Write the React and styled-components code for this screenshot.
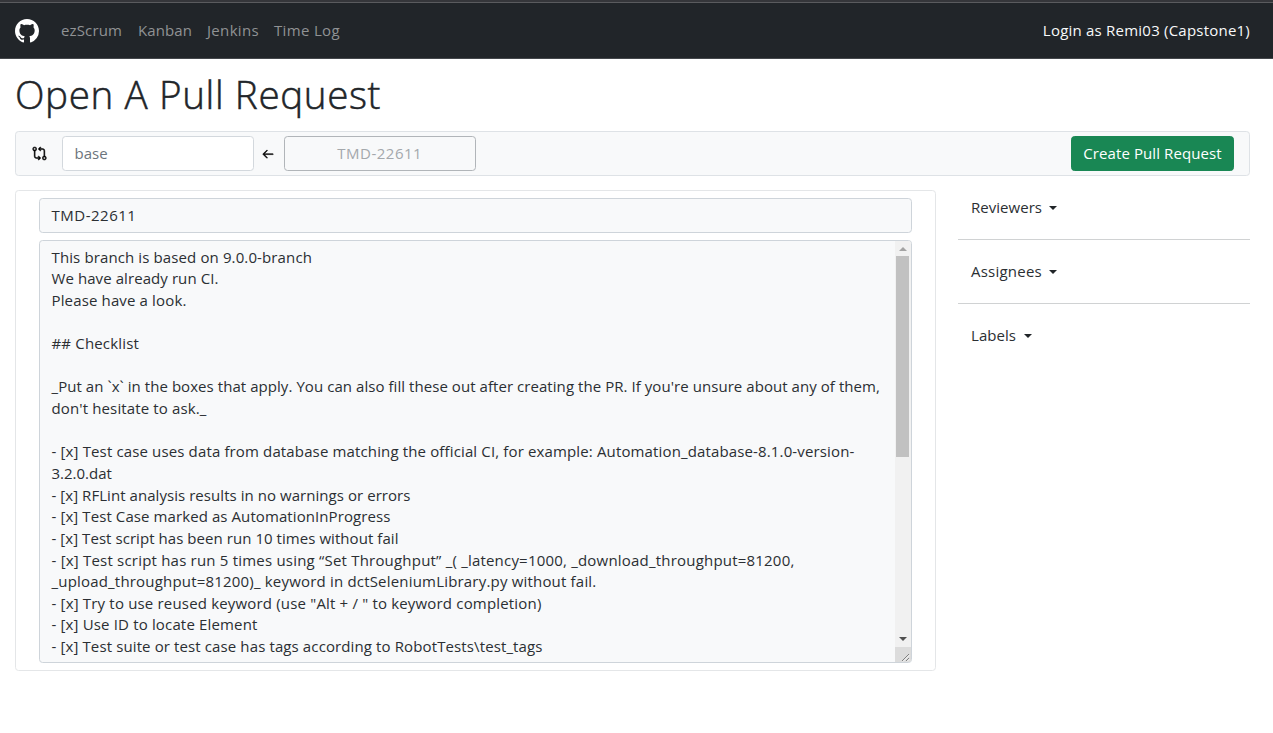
import React from "react";
import styled, { createGlobalStyle } from "styled-components";
import { GoArrowLeft, GoGitCompare } from "react-icons/go";

const GlobalStyle = createGlobalStyle`
  *, *::before, *::after { box-sizing: border-box; }
  body {
    margin: 0;
    background: #fff;
    color: #2b2f33;
    font-family: "Open Sans", "Noto Sans", sans-serif;
    font-size: 15px;
    line-height: 22px;
    overflow: hidden;
  }
`;

const Text = styled.span`
  letter-spacing: ${({ $track = 0 }) => $track}px;
  white-space: pre;
`;

const Navbar = styled.header`
  height: 59px;
  padding: 0 23px 0 15px;
  display: flex;
  align-items: center;
  background: #212529;
  border-top: 2px solid #35363a;
  border-bottom: 1px solid #44474b;
  box-shadow: inset 0 1px 0 #5a5b5e;
`;

const Brand = styled.a`
  display: flex;
  color: #fff;
  margin-right: 22px;
  padding-top: 1px;
`;

const NavLinks = styled.nav`
  display: flex;
  flex: 1;
`;

const NavLink = styled.a`
  width: ${({ $width }) => $width}px;
  color: #909294;
`;

const Login = styled.div`
  color: #f8f9fa;
`;

const Page = styled.main`
  padding: 12px 23px 0 15px;
`;

const Title = styled.h1`
  margin: 0;
  height: 60px;
  color: #212529;
  font-size: 38.6px;
  font-weight: 300;
  line-height: 46px;
  letter-spacing: 0.62px;
  -webkit-text-stroke: 0.5px #212529;
  white-space: nowrap;
`;

const CompareBar = styled.section`
  display: flex;
  align-items: center;
  height: 45px;
  padding: 0 15px;
  background: #f8f9fa;
  border: 1px solid #dee2e6;
  border-radius: 3.6px;
`;

const IconSlot = styled.span`
  display: flex;
  justify-content: ${({ $start }) => ($start ? "flex-start" : "center")};
  padding-left: ${({ $start }) => ($start ? 0.7 : 0)}px;
  padding-right: ${({ $start }) => ($start ? 0 : 2)}px;
  width: ${({ $width }) => $width}px;
  color: #000;
`;

const BranchField = styled.div`
  width: 192px;
  height: 35px;
  padding: 5px 12px 6px 11.5px;
  background: #fff;
  border: 1px solid #d3d8dd;
  border-radius: 3.6px;
  color: #6c757d;
`;

const HeadBranch = styled(BranchField)`
  background: transparent;
  border-color: #b1b5b9;
  color: #a4a8ac;
  text-align: center;
`;

const CreateButton = styled.button`
  margin-left: auto;
  width: 163px;
  height: 35px;
  padding: 0 0 1px;
  background: #198754;
  border: 1px solid #198754;
  border-radius: 3.6px;
  color: #fff;
  font: inherit;
`;

const Columns = styled.div`
  display: flex;
  gap: 22px;
  margin-top: 14px;
`;

const Card = styled.section`
  width: 921px;
  height: 481px;
  padding: 7px 23px;
  border: 1px solid #e4e6e8;
  border-radius: 3.6px;
`;

const TitleField = styled.div`
  height: 35px;
  padding: 5px 12px 5px 11.5px;
  background: #f8f9fa;
  border: 1px solid #ced4da;
  border-radius: 3.6px;
`;

const Description = styled.div`
  display: flex;
  height: 423px;
  margin-top: 7px;
  background: #f8f9fa;
  border: 1px solid #ced4da;
  border-radius: 3.6px;
  overflow: hidden;
`;

const DescriptionBody = styled.div`
  flex: 1;
  padding: 5.6px 0 0 11.5px;
`;

const Line = styled.div`
  height: 21.65px;
  line-height: 21.65px;
`;

const Scrollbar = styled.div`
  display: flex;
  flex-direction: column;
  width: 16px;
  background: #f1f1f1;
`;

const ScrollArrow = styled.div`
  display: flex;
  align-items: center;
  justify-content: center;
  height: ${({ $muted }) => ($muted ? 15 : 17)}px;
  color: ${({ $muted }) => ($muted ? "#a3a3a3" : "#505050")};
`;

const ScrollThumb = styled.div`
  height: 201px;
  margin: 0 2px 0 1px;
  background: #c1c1c1;
`;

const Resizer = styled.div`
  display: flex;
  align-items: flex-end;
  justify-content: flex-end;
  height: 15px;
  background: #dcdcdc;
`;

const Spacer = styled.div`
  flex: 1;
`;

const Sidebar = styled.aside`
  flex: 1;
`;

const Dropdown = styled.div`
  display: flex;
  align-items: center;
  height: ${({ $first }) => ($first ? 50 : 64)}px;
  padding: ${({ $first }) => ($first ? "0 0 15px 13px" : "0 0 1px 13px")};
  border-bottom: 1px solid ${({ $last }) => ($last ? "transparent" : "#d0d2d3")};
`;

const Caret = styled.span`
  margin: 1px 0 0 7.5px;
  border: 4.8px solid transparent;
  border-top-color: #212529;
  border-bottom: 0;
`;

const GitHubMark = () => (
  <svg width="24" height="24" viewBox="0 0 16 16" fill="currentColor">
    <path d="M8 0C3.58 0 0 3.58 0 8c0 3.54 2.29 6.53 5.47 7.59.4.07.55-.17.55-.38 0-.19-.01-.82-.01-1.49-2.01.37-2.53-.49-2.69-.94-.09-.23-.48-.94-.82-1.13-.28-.15-.68-.52-.01-.53.63-.01 1.08.58 1.23.82.72 1.21 1.87.87 2.33.66.07-.52.28-.87.51-1.07-1.78-.2-3.64-.89-3.64-3.95 0-.87.31-1.59.82-2.15-.08-.2-.36-1.02.08-2.12 0 0 .67-.21 2.2.82.64-.18 1.32-.27 2-.27s1.36.09 2 .27c1.53-1.04 2.2-.82 2.2-.82.44 1.1.16 1.92.08 2.12.51.56.82 1.27.82 2.15 0 3.07-1.87 3.75-3.65 3.95.29.25.54.73.54 1.48 0 1.07-.01 1.93-.01 2.2 0 .21.15.46.55.38A8.01 8.01 0 0 0 16 8c0-4.42-3.58-8-8-8z" />
  </svg>
);

const links = [
  { label: "ezScrum", width: 77, track: 0.13 },
  { label: "Kanban", width: 69, track: 0.1 },
  { label: "Jenkins", width: 67, track: 0.33 },
  { label: "Time Log", width: 70, track: 0.34 },
];

const lines = [
  ["This branch is based on 9.0.0-branch", 0.12],
  ["We have already run CI.", 0.08],
  ["Please have a look.", 0.143],
  ["", 0],
  ["## Checklist", 0.168],
  ["", 0],
  ["_Put an `x` in the boxes that apply. You can also fill these out after creating the PR. If you're unsure about any of them,", 0.058],
  ["don't hesitate to ask._", 0.131],
  ["", 0],
  ["- [x] Test case uses data from database matching the official CI, for example: Automation_database-8.1.0-version-", 0.14],
  ["3.2.0.dat", 0],
  ["- [x] RFLint analysis results in no warnings or errors", 0.054],
  ["- [x] Test Case marked as AutomationInProgress", 0.089],
  ["- [x] Test script has been run 10 times without fail", 0.056],
  ["- [x] Test script has run 5 times using “Set Throughput” _( _latency=1000, _download_throughput=81200,", 0.204],
  ["_upload_throughput=81200)_ keyword in dctSeleniumLibrary.py without fail.", 0.19],
  ['- [x] Try to use reused keyword (use "Alt + / " to keyword completion)', 0.177],
  ["- [x] Use ID to locate Element", 0.156],
  ["- [x] Test suite or test case has tags according to RobotTests\\test_tags", 0.117],
];

const menus = [
  { label: "Reviewers", track: 0.03 },
  { label: "Assignees", track: 0.23 },
  { label: "Labels", track: 0.05 },
];

export default function App() {
  return (
    <>
      <GlobalStyle />
      <Navbar>
        <Brand><GitHubMark /></Brand>
        <NavLinks>
          {links.map((link) => (
            <NavLink key={link.label} $width={link.width}>
              <Text $track={link.track}>{link.label}</Text>
            </NavLink>
          ))}
        </NavLinks>
        <Login><Text $track={0.22}>Login as Remi03 (Capstone1)</Text></Login>
      </Navbar>
      <Page>
        <Title>Open A Pull Request</Title>
        <CompareBar>
          <IconSlot $width={31} $start><GoGitCompare size={15} strokeWidth={0.8} stroke="#000" /></IconSlot>
          <BranchField><Text>base</Text></BranchField>
          <IconSlot $width={30}><GoArrowLeft size={14} strokeWidth={1} stroke="#000" /></IconSlot>
          <HeadBranch><Text $track={0.5}>TMD-22611</Text></HeadBranch>
          <CreateButton><Text $track={0.1}>Create Pull Request</Text></CreateButton>
        </CompareBar>
        <Columns>
          <Card>
            <TitleField><Text $track={0.51}>TMD-22611</Text></TitleField>
            <Description>
              <DescriptionBody>
                {lines.map(([text, track], index) => (
                  <Line key={index}><Text $track={track}>{text}</Text></Line>
                ))}
              </DescriptionBody>
              <Scrollbar>
                <ScrollArrow $muted>
                  <svg width="8" height="4" viewBox="0 0 8 4"><path d="M0 4L4 0L8 4Z" fill="currentColor" /></svg>
                </ScrollArrow>
                <ScrollThumb />
                <Spacer />
                <ScrollArrow>
                  <svg width="8" height="4" viewBox="0 0 8 4"><path d="M0 0L4 4L8 0Z" fill="currentColor" /></svg>
                </ScrollArrow>
                <Resizer>
                  <svg width="10" height="10" viewBox="0 0 10 10" fill="none">
                    <path d="M1 9L8 2M5 9L8 6" stroke="#808080" />
                    <path d="M2 9.5L8.5 3M6 9.5L8.5 7" stroke="#f4f4f4" />
                  </svg>
                </Resizer>
              </Scrollbar>
            </Description>
          </Card>
          <Sidebar>
            {menus.map((menu, index) => (
              <Dropdown key={menu.label} $first={index === 0} $last={index === menus.length - 1}>
                <Text $track={menu.track}>{menu.label}</Text>
                <Caret />
              </Dropdown>
            ))}
          </Sidebar>
        </Columns>
      </Page>
    </>
  );
}
